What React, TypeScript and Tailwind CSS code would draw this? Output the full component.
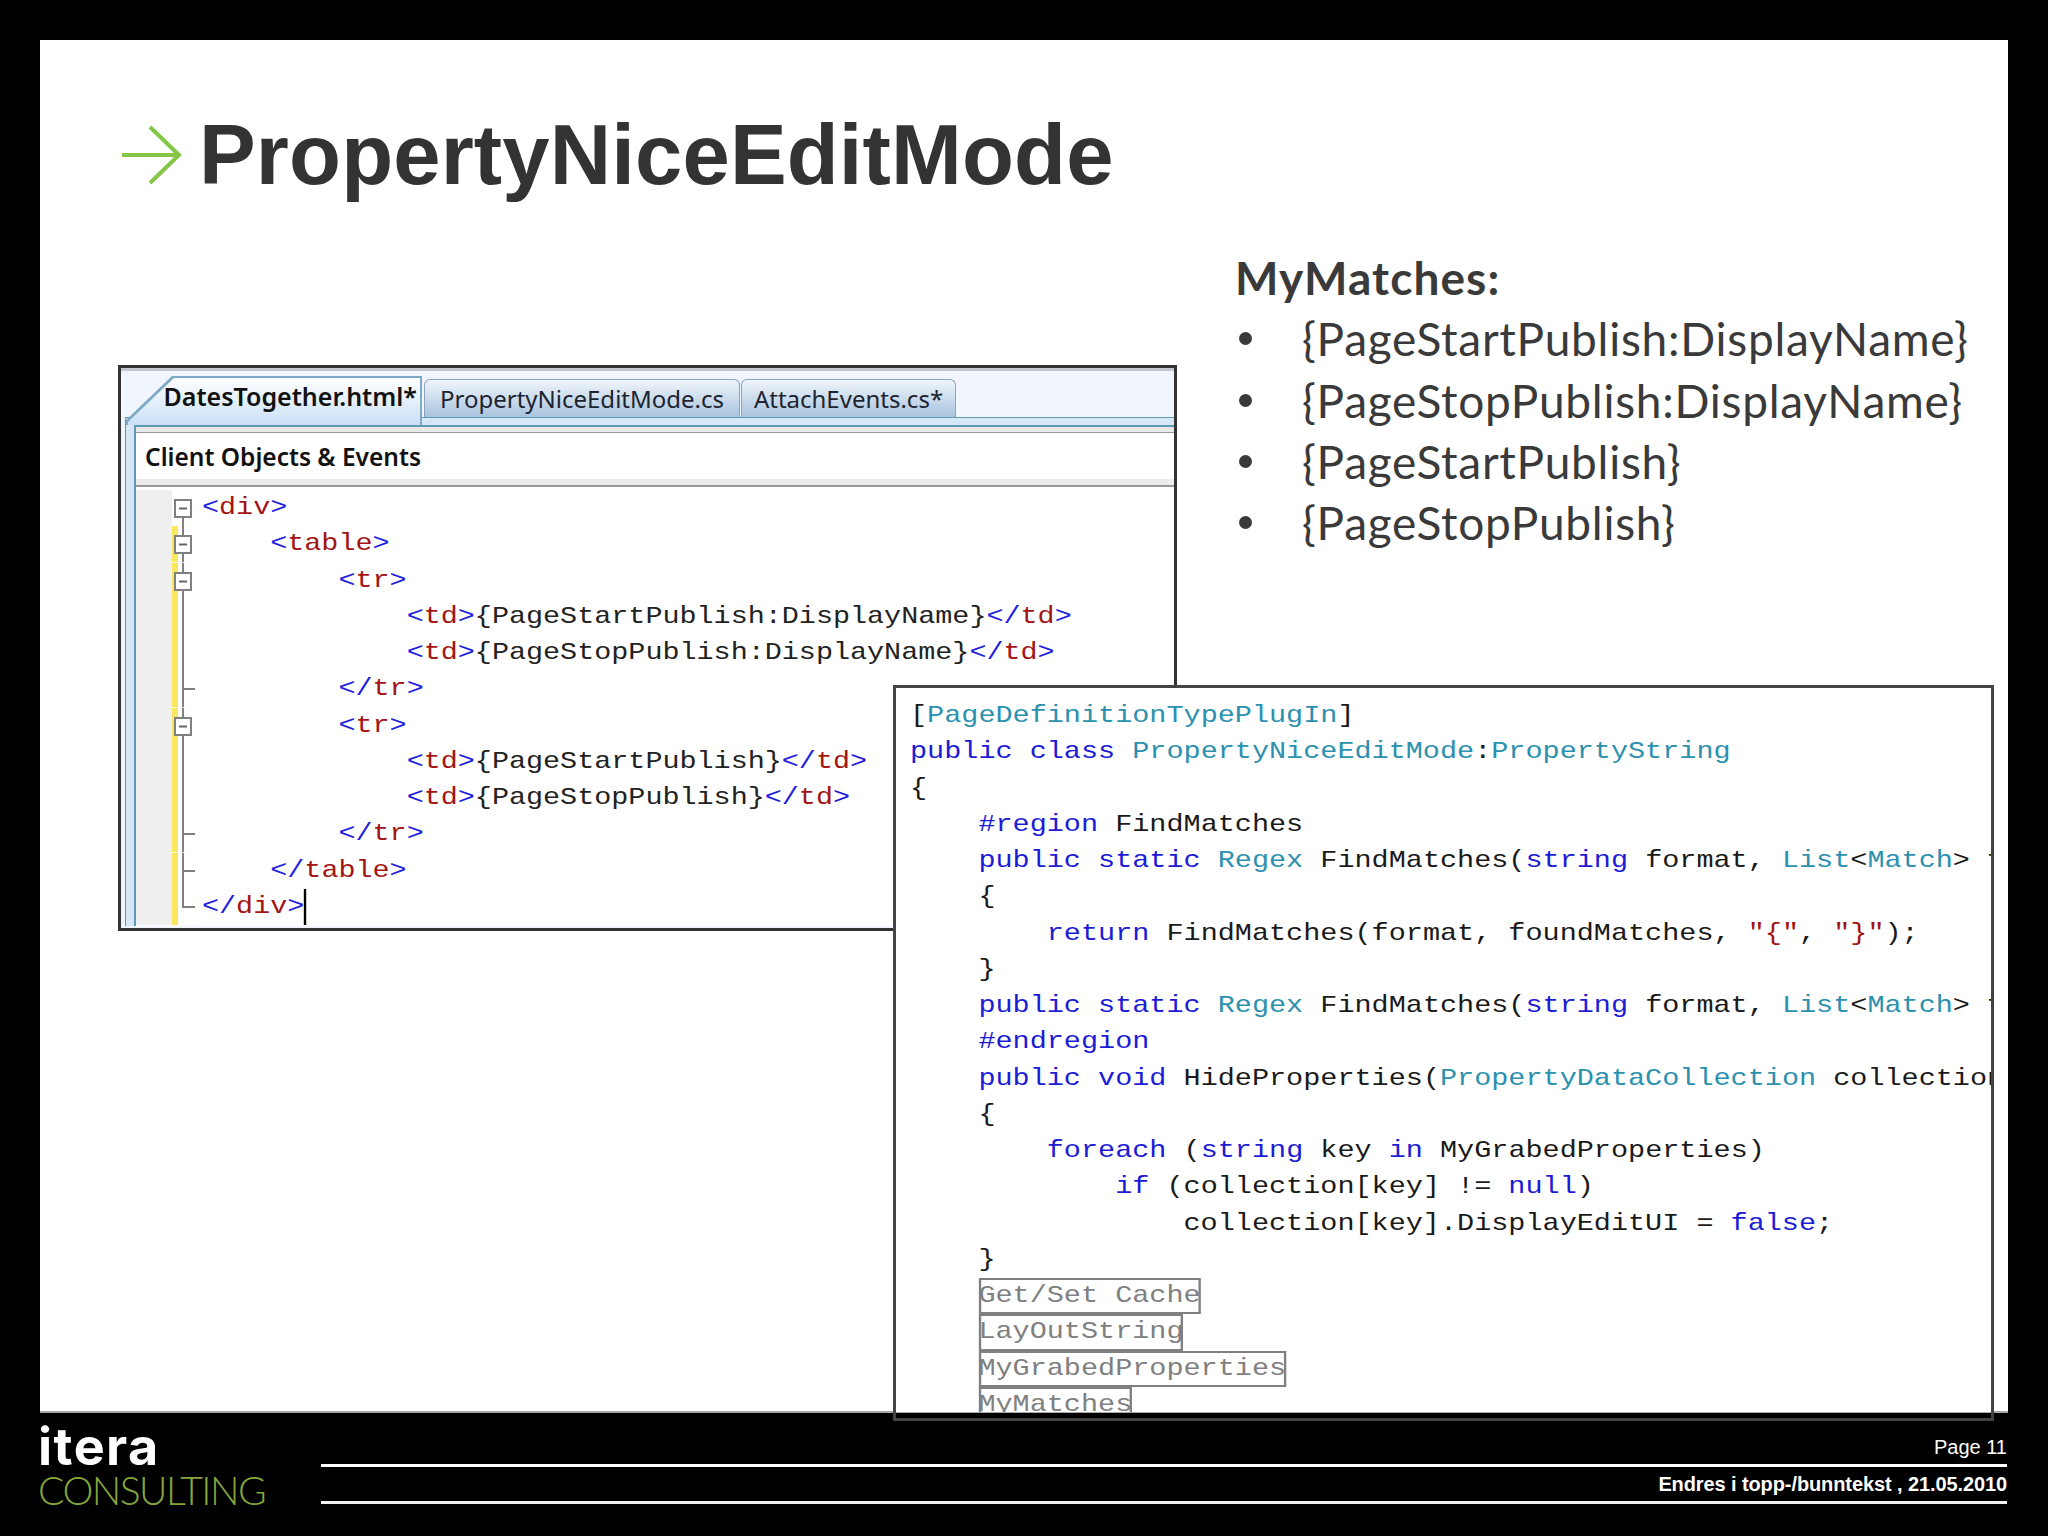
import type { ReactNode } from "react";

type Fold = "box" | "line" | "tick" | "end";

// <tag> style: blue brackets, dark red name
function Tag({ name, close = false }: { name: string; close?: boolean }) {
  return (
    <>
      <span className="text-[#2222dd]">{close ? "</" : "<"}</span>
      <span className="text-[#a31515]">{name}</span>
      <span className="text-[#2222dd]">{">"}</span>
    </>
  );
}

function Cell({ open, body, close }: { open: string; body: string; close: string }) {
  return (
    <>
      <Tag name={open} />
      <span className="text-[#222222]">{body}</span>
      <Tag name={close} close />
    </>
  );
}

const markup: { fold: Fold; changed: boolean; text: ReactNode }[] = [
  { fold: "box", changed: false, text: <Tag name="div" /> },
  { fold: "box", changed: true, text: <>{"    "}<Tag name="table" /></> },
  { fold: "box", changed: true, text: <>{"        "}<Tag name="tr" /></> },
  { fold: "line", changed: true, text: <>{"            "}<Cell open="td" body="{PageStartPublish:DisplayName}" close="td" /></> },
  { fold: "line", changed: true, text: <>{"            "}<Cell open="td" body="{PageStopPublish:DisplayName}" close="td" /></> },
  { fold: "tick", changed: true, text: <>{"        "}<Tag name="tr" close /></> },
  { fold: "box", changed: true, text: <>{"        "}<Tag name="tr" /></> },
  { fold: "line", changed: true, text: <>{"            "}<Cell open="td" body="{PageStartPublish}" close="td" /></> },
  { fold: "line", changed: true, text: <>{"            "}<Cell open="td" body="{PageStopPublish}" close="td" /></> },
  { fold: "tick", changed: true, text: <>{"        "}<Tag name="tr" close /></> },
  { fold: "tick", changed: true, text: <>{"    "}<Tag name="table" close /></> },
  {
    fold: "end",
    changed: true,
    text: (
      <>
        <Tag name="div" close />
        <span className="inline-block h-[36px] w-0 border-r-2 border-black align-top" />
      </>
    ),
  },
];

function FoldMark({ fold, changed, first }: { fold: Fold; changed: boolean; first: boolean }) {
  return (
    <svg width="30" height="36.25" viewBox="0 0 30 36.25" className="shrink-0">
      {changed && <rect x="0" y="0" width="6" height="36.25" fill="#fbe75f" />}
      {fold === "end" ? (
        <path d="M11 0V18H23" fill="none" stroke="#808080" strokeWidth="2" />
      ) : (
        !first && <line x1="11" y1="0" x2="11" y2="36.25" stroke="#808080" strokeWidth="2" />
      )}
      {first && <line x1="11" y1="28" x2="11" y2="36.25" stroke="#808080" strokeWidth="2" />}
      {fold === "tick" && <line x1="11" y1="18" x2="23" y2="18" stroke="#808080" strokeWidth="2" />}
      {fold === "box" && (
        <>
          <rect x="3" y="10" width="16" height="17" fill="#ffffff" stroke="#808080" strokeWidth="2" />
          <line x1="7" y1="18.5" x2="15" y2="18.5" stroke="#666666" strokeWidth="2" />
        </>
      )}
    </svg>
  );
}

function Editor() {
  return (
    <div className="h-[566px] w-[1059px] border-[3px] border-[#333333] bg-[#f1f5fd]">
      <div className="h-[3px] bg-[#c3c6cf]" />
      <div className="flex h-[46px] items-end pl-[5px]">
        {/* active tab overlaps the blue band below it */}
        <div className="relative z-10 -mb-[8px] h-[49px] w-[296px] bg-[#7fa9c4] [clip-path:polygon(0_44px,46px_0,100%_0,100%_100%,0_100%)]">
          <div className="ml-[2px] mr-[2px] mt-[2px] flex h-[47px] items-start justify-end bg-gradient-to-b from-white to-[#c9e0f5] pr-[3px] pt-[2px] font-['Noto_Sans',sans-serif] text-[25px] leading-[32px] font-semibold text-[#111111] [clip-path:polygon(0_44px,46px_0,100%_0,100%_100%,0_100%)]">
            DatesTogether.html*
          </div>
        </div>
        <div className="ml-[2px] flex h-[38px] w-[316px] items-center justify-center rounded-t-[6px] border border-b-0 border-[#8aa5bd] bg-gradient-to-b from-[#f0f5fb] to-[#a8c3de] font-['Noto_Sans',sans-serif] text-[24px] text-[#1c2430]">
          PropertyNiceEditMode.cs
        </div>
        <div className="ml-[1px] flex h-[38px] w-[215px] items-center justify-center rounded-t-[6px] border border-b-0 border-[#8aa5bd] bg-gradient-to-b from-[#f0f5fb] to-[#a8c3de] font-['Noto_Sans',sans-serif] text-[24px] text-[#1c2430]">
          AttachEvents.cs*
        </div>
      </div>
      <div className="ml-[4px] border-l border-t border-[#5f9ab5] bg-[#d6e8f8] pl-[8px] pt-[7px]">
        <div className="border-l-2 border-t-2 border-[#5f9ab5] bg-white">
          <div className="h-[6px] border-b border-[#9a9a9a] bg-[#e8e8e8]" />
          <div className="flex h-[46px] items-center pl-[9px] pt-[2px] font-['Noto_Sans',sans-serif] text-[24.5px] font-semibold text-[#111111]">
            Client Objects &amp; Events
          </div>
          <div className="h-[8px] border-b-2 border-[#9a9a9a] bg-[#ececec]" />
          <div className="h-[439px] pt-[3px]">
            {markup.map((row, i) => (
              <div key={i} className="flex h-[36.25px]">
                <div className="w-[36px] shrink-0 bg-[#efefef]" />
                <FoldMark fold={row.fold} changed={row.changed} first={i === 0} />
                <pre className="origin-top-left scale-x-[1.184] font-['Liberation_Mono',monospace] text-[24px] leading-[36.25px]">
                  {row.text}
                </pre>
              </div>
            ))}
          </div>
        </div>
      </div>
    </div>
  );
}

const kw = "text-[#1c1cd6]";
const ty = "text-[#2b91af]";
const st = "text-[#a31515]";
const bx = "inline-block text-[#808080] outline-2 -outline-offset-2 outline-[#808080]";

function CodePanel() {
  const findMatches = (
    <>
      {"    "}
      <span className={kw}>public static</span> <span className={ty}>Regex</span> FindMatches(<span className={kw}>string</span> format, <span className={ty}>List</span>{"<"}<span className={ty}>Match</span>{"> foundMatches)"}
    </>
  );
  return (
    <div className="absolute left-[853px] top-[645px] h-[736px] w-[1101px] border-[3px] border-[#444444]">
      <div className="h-[724px] overflow-hidden bg-white pl-[14px] pt-[10px]">
        <pre className="origin-top-left scale-x-[1.187] font-['Liberation_Mono',monospace] text-[24px] leading-[36.25px] text-[#1a1a1a]">
          <div>[<span className={ty}>PageDefinitionTypePlugIn</span>]</div>
          <div><span className={kw}>public class</span> <span className={ty}>PropertyNiceEditMode</span>:<span className={ty}>PropertyString</span></div>
          <div>{"{"}</div>
          <div>{"    "}<span className={kw}>#region</span> FindMatches</div>
          <div>{findMatches}</div>
          <div>{"    {"}</div>
          <div>{"        "}<span className={kw}>return</span> FindMatches(format, foundMatches, <span className={st}>{'"{"'}</span>, <span className={st}>{'"}"'}</span>);</div>
          <div>{"    }"}</div>
          <div>{findMatches}</div>
          <div>{"    "}<span className={kw}>#endregion</span></div>
          <div>{"    "}<span className={kw}>public void</span> HideProperties(<span className={ty}>PropertyDataCollection</span> collection)</div>
          <div>{"    {"}</div>
          <div>{"        "}<span className={kw}>foreach</span> (<span className={kw}>string</span> key <span className={kw}>in</span> MyGrabedProperties)</div>
          <div>{"            "}<span className={kw}>if</span> (collection[key] != <span className={kw}>null</span>)</div>
          <div>{"                "}collection[key].DisplayEditUI = <span className={kw}>false</span>;</div>
          <div>{"    }"}</div>
          <div>{"    "}<span className={bx}>Get/Set Cache</span></div>
          <div>{"    "}<span className={bx}>LayOutString</span></div>
          <div>{"    "}<span className={bx}>MyGrabedProperties</span></div>
          <div>{"    "}<span className={bx}>MyMatches</span></div>
        </pre>
      </div>
    </div>
  );
}

const matches = [
  "{PageStartPublish:DisplayName}",
  "{PageStopPublish:DisplayName}",
  "{PageStartPublish}",
  "{PageStopPublish}",
];

export default function App() {
  return (
    <div className="h-[1536px] w-[2048px] overflow-hidden bg-black">
      <div className="h-10" />
      <div className="relative mx-10 h-[1373px] border-b-2 border-[#a8a8a8] bg-white">
        {/* title */}
        <div className="flex h-[190px] items-start pl-[82px] pt-[66px]">
          <svg width="60" height="60" viewBox="0 0 60 60" className="mt-[19px] shrink-0">
            <path d="M0 30H57M28 2L57 30L28 58" fill="none" stroke="#85c646" strokeWidth="4" />
          </svg>
          <h1 className="ml-[17px] font-['Liberation_Sans',sans-serif] text-[85px] leading-[98px] font-bold tracking-[0.15px] text-[#333333]">
            PropertyNiceEditMode
          </h1>
        </div>

        <div className="flex">
          <div className="ml-[78px] mt-[135px]">
            <Editor />
          </div>
          <div className="ml-[58px] mt-[17px] font-['Lato',sans-serif] text-[46px] leading-[61.3px] tracking-[0.73px] text-[#3a3a3a]">
            <div className="font-bold tracking-[1.1px]">MyMatches:</div>
            {matches.map((m) => (
              <div key={m} className="flex items-center">
                <span className="ml-[4px] h-[13px] w-[13px] shrink-0 rounded-full bg-[#3a3a3a]" />
                <span className="ml-[50px]">{m}</span>
              </div>
            ))}
          </div>
        </div>

        <CodePanel />
      </div>

      <div className="flex pl-[38px] pr-[41px]">
        <div className="w-[283px] shrink-0">
          <div className="mt-[11px] font-['Inter',sans-serif] text-[52px] leading-[46px] font-bold tracking-[1.5px] text-white">
            itera
          </div>
          <div className="font-['Lato',sans-serif] text-[39px] leading-[40px] font-light tracking-[-1.5px] text-[#86a63c]">
            CONSULTING
          </div>
        </div>
        <div className="flex-1 text-right font-['Liberation_Sans',sans-serif] text-white">
          <div className="h-[54px] border-b-[3px] border-white pt-[20px] text-[20px] leading-[28px]">Page 11</div>
          <div className="h-[37px] border-b-[3px] border-[#f2f2f2] text-[20px] leading-[34px] font-bold tracking-[-0.1px]">
            Endres i topp-/bunntekst , 21.05.2010
          </div>
        </div>
      </div>
    </div>
  );
}
